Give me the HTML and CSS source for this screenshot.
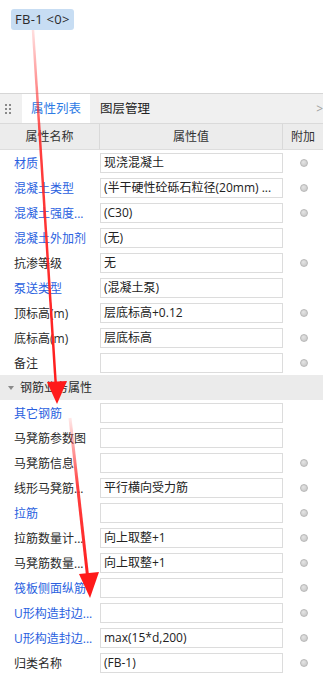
FILE: index.html
```html
<!DOCTYPE html>
<html>
  <head>
    <title>属性列表</title>
    <link rel="stylesheet" href="styles.css">
  </head>
  <body>
    <div class="canvas">
      <span class="tag">FB-1 &lt;0&gt;</span>
    </div>

    <div class="panel">
      <div class="tabs">
        <span class="grip"></span>
        <span class="tab active">属性列表</span>
        <span class="tab">图层管理</span>
        <span class="more">&gt;</span>
      </div>

      <div class="grid-head">
        <div>属性名称</div>
        <div>属性值</div>
        <div>附加</div>
      </div>

      <div class="row"><div class="name link">材质</div><div class="val">现浇混凝土</div><div class="dot"></div></div>
      <div class="row"><div class="name link">混凝土类型</div><div class="val">(半干硬性砼砾石粒径(20mm) ...</div><div class="dot"></div></div>
      <div class="row"><div class="name link">混凝土强度...</div><div class="val">(C30)</div><div class="dot"></div></div>
      <div class="row"><div class="name link">混凝土外加剂</div><div class="val">(无)</div><div></div></div>
      <div class="row"><div class="name">抗渗等级</div><div class="val">无</div><div class="dot"></div></div>
      <div class="row"><div class="name link">泵送类型</div><div class="val">(混凝土泵)</div><div></div></div>
      <div class="row"><div class="name">顶标高(m)</div><div class="val">层底标高+0.12</div><div class="dot"></div></div>
      <div class="row"><div class="name">底标高(m)</div><div class="val">层底标高</div><div class="dot"></div></div>
      <div class="row"><div class="name">备注</div><div class="val"></div><div class="dot"></div></div>

      <div class="section"><span class="caret"></span>钢筋业务属性</div>

      <div class="row"><div class="name link">其它钢筋</div><div class="val"></div><div></div></div>
      <div class="row"><div class="name">马凳筋参数图</div><div class="val"></div><div></div></div>
      <div class="row"><div class="name">马凳筋信息</div><div class="val"></div><div class="dot"></div></div>
      <div class="row"><div class="name">线形马凳筋...</div><div class="val">平行横向受力筋</div><div class="dot"></div></div>
      <div class="row"><div class="name link">拉筋</div><div class="val"></div><div class="dot"></div></div>
      <div class="row"><div class="name">拉筋数量计...</div><div class="val">向上取整+1</div><div class="dot"></div></div>
      <div class="row"><div class="name">马凳筋数量...</div><div class="val">向上取整+1</div><div class="dot"></div></div>
      <div class="row"><div class="name link">筏板侧面纵筋</div><div class="val"></div><div class="dot"></div></div>
      <div class="row"><div class="name link">U形构造封边...</div><div class="val"></div><div class="dot"></div></div>
      <div class="row"><div class="name link">U形构造封边...</div><div class="val">max(15*d,200)</div><div class="dot"></div></div>
      <div class="row"><div class="name">归类名称</div><div class="val">(FB-1)</div><div class="dot"></div></div>
    </div>

    <!-- annotation arrows drawn over the panel -->
    <svg class="arrows" width="323" height="677" viewBox="0 0 323 677">
      <defs>
        <linearGradient id="fade1" x1="0" y1="30" x2="0" y2="400" gradientUnits="userSpaceOnUse">
          <stop offset="0" stop-color="#ff2a2a" stop-opacity="0.15"/>
          <stop offset="0.3" stop-color="#ff2a2a" stop-opacity="0.9"/>
          <stop offset="1" stop-color="#ff1a1a"/>
        </linearGradient>
        <linearGradient id="fade2" x1="0" y1="418" x2="0" y2="590" gradientUnits="userSpaceOnUse">
          <stop offset="0" stop-color="#ff2a2a" stop-opacity="0.1"/>
          <stop offset="0.4" stop-color="#ff2a2a" stop-opacity="0.9"/>
          <stop offset="1" stop-color="#ff1a1a"/>
        </linearGradient>
      </defs>
      <line x1="33" y1="30" x2="56" y2="388" stroke="url(#fade1)" stroke-width="2.5"/>
      <polygon points="47,382 67,381 57,404" fill="#ff1a1a"/>
      <line x1="70" y1="418" x2="88" y2="580" stroke="url(#fade2)" stroke-width="3"/>
      <polygon points="79,574 99,572 90,598" fill="#ff1a1a"/>
    </svg>
  </body>
</html>
```

FILE: styles.css
```css
* {
  box-sizing: border-box;
  margin: 0;
  padding: 0;
}

body {
  width: 323px;
  height: 677px;
  overflow: hidden;
  position: relative;
  background: #ffffff;
  font-family: "Open Sans", "Noto Sans CJK SC", sans-serif;
  font-size: 12px;
  color: #333333;
}

.canvas {
  height: 94px;
  padding: 9px 0 0 11px;
  border-bottom: 1px solid #d6d6d6;
}

.tag {
  display: inline-block;
  height: 21px;
  line-height: 21px;
  padding: 0 4px;
  background: #c7ddf3;
  border-radius: 3px;
  font-size: 13px;
  color: #2b2b2b;
  letter-spacing: 0.3px;
}

.tabs {
  display: flex;
  align-items: stretch;
  height: 30px;
  background: #f0f0f0;
  border-bottom: 1px solid #dadada;
  position: relative;
}

.grip {
  width: 22px;
  background-image: radial-gradient(circle, #8a8a8a 1px, transparent 1.3px);
  background-size: 4px 4px;
  background-position: 4px 9px;
  background-repeat: repeat;
  background-clip: content-box;
  padding: 9px 10px 9px 4px;
}

.tab {
  padding: 0 10px;
  line-height: 29px;
  font-size: 12.5px;
  color: #222222;
}

.tab.active {
  background: #ffffff;
  color: #2d7be5;
  width: 68px;
  padding: 0;
  text-align: center;
}

.more {
  position: absolute;
  right: 0;
  top: 6px;
  color: #a0a0a0;
  font-size: 12px;
}

.grid-head,
.row {
  display: grid;
  grid-template-columns: 100px 183px 40px;
}

.grid-head {
  height: 26px;
  background: #ececec;
  border-bottom: 1px solid #dddddd;
}

.grid-head div {
  text-align: center;
  line-height: 25px;
  color: #333333;
  border-right: 1px solid #d9d9d9;
}

.grid-head div:last-child {
  border-right: none;
}

.row {
  height: 25px;
  align-items: center;
}

.name {
  padding-left: 14px;
  white-space: nowrap;
  overflow: hidden;
  color: #2a2a2a;
}

.name.link {
  color: #2a5fe0;
}

.val {
  height: 20px;
  line-height: 18px;
  border: 1px solid #dcdcdc;
  padding-left: 3px;
  white-space: nowrap;
  overflow: hidden;
  color: #222222;
}

.dot {
  width: 8px;
  height: 8px;
  margin-left: 17px;
  border-radius: 50%;
  background: radial-gradient(circle at 40% 35%, #e4e4e4, #c4c4c4);
  border: 1px solid #b8b8b8;
}

.section {
  height: 25px;
  line-height: 25px;
  background: #ebebeb;
  padding-left: 8px;
  color: #2a2a2a;
}

.caret {
  display: inline-block;
  width: 0;
  height: 0;
  border-left: 3px solid transparent;
  border-right: 3px solid transparent;
  border-top: 4px solid #8a8a8a;
  margin-right: 6px;
  vertical-align: 2px;
}

.arrows {
  position: absolute;
  left: 0;
  top: 0;
  pointer-events: none;
}
```
